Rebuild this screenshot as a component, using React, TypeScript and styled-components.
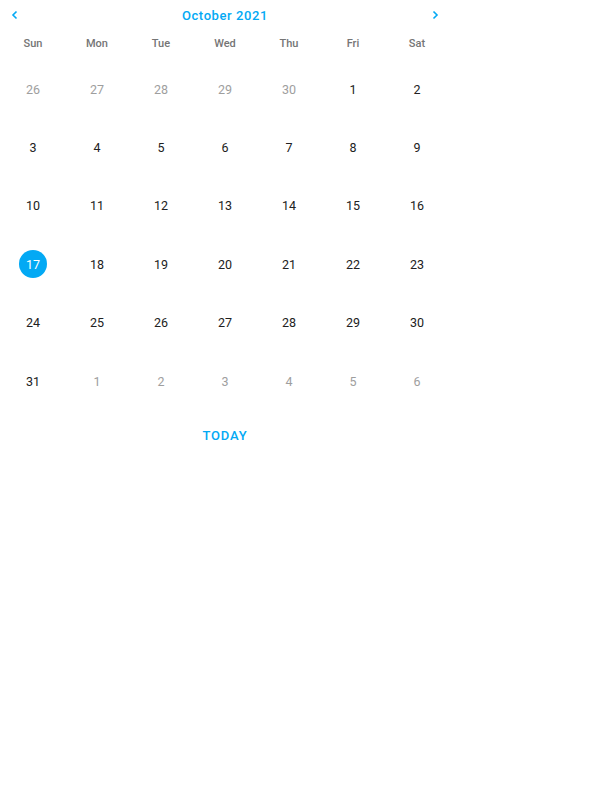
import React from "react";
import styled, { createGlobalStyle } from "styled-components";

const Global = createGlobalStyle`
  body { margin: 0; background: #fff; font-family: Roboto, "Noto Sans", sans-serif; }
`;

const Calendar = styled.div`
  width: 450px;
  display: flex;
  flex-direction: column;
`;

const Header = styled.div`
  height: 30px;
  display: flex;
  align-items: center;
  justify-content: space-between;
  padding: 0 8px;
`;

const NavButton = styled.button`
  width: 14px;
  height: 14px;
  padding: 0;
  border: none;
  background: none;
  display: flex;
  align-items: center;
  justify-content: center;
  color: #03a9f4;
  cursor: pointer;
`;

const Title = styled.div`
  font-size: 13px;
  font-weight: 500;
  letter-spacing: 0.6px;
  color: #03a9f4;
`;

const Grid = styled.div`
  display: grid;
  grid-template-columns: repeat(7, 64px);
  padding: 0 1px;
`;

const WeekDay = styled.div`
  height: 30px;
  box-sizing: border-box;
  display: flex;
  align-items: center;
  justify-content: center;
  font-size: 11px;
  font-weight: 500;
  color: #757575;
  padding-bottom: 4px;
`;

const DayCell = styled.div`
  height: 58.4px;
  display: flex;
  align-items: center;
  justify-content: center;
`;

const Day = styled.div<{ $muted?: boolean; $selected?: boolean }>`
  width: 28px;
  height: 28px;
  border-radius: 50%;
  display: flex;
  align-items: center;
  justify-content: center;
  font-size: 12.5px;
  color: ${(p) => (p.$selected ? "#fff" : p.$muted ? "#9e9e9e" : "#212121")};
  background: ${(p) => (p.$selected ? "#03a9f4" : "transparent")};
`;

const Footer = styled.div`
  height: 50px;
  display: flex;
  align-items: center;
  justify-content: center;
`;

const TodayButton = styled.button`
  border: none;
  background: none;
  font-family: Roboto, sans-serif;
  font-size: 13px;
  font-weight: 500;
  letter-spacing: 0.8px;
  color: #03a9f4;
  padding: 8px;
  cursor: pointer;
`;

const weekdays = ["Sun", "Mon", "Tue", "Wed", "Thu", "Fri", "Sat"];

const days: { d: number; muted?: boolean }[] = [
  ...[26, 27, 28, 29, 30].map((d) => ({ d, muted: true })),
  ...Array.from({ length: 31 }, (_, i) => ({ d: i + 1 })),
  ...[1, 2, 3, 4, 5, 6].map((d) => ({ d, muted: true })),
];

const Chevron = ({ dir }: { dir: "left" | "right" }) => (
  <svg width="10" height="10" viewBox="0 0 10 10">
    <path
      d={dir === "left" ? "M6.5 1.5 L3 5 L6.5 8.5" : "M3.5 1.5 L7 5 L3.5 8.5"}
      fill="none"
      stroke="currentColor"
      strokeWidth="1.6"
    />
  </svg>
);

export default function App() {
  return (
    <>
      <Global />
      <Calendar>
        <Header>
          <NavButton aria-label="previous">
            <Chevron dir="left" />
          </NavButton>
          <Title>October 2021</Title>
          <NavButton aria-label="next">
            <Chevron dir="right" />
          </NavButton>
        </Header>
        <Grid>
          {weekdays.map((w) => (
            <WeekDay key={w}>{w}</WeekDay>
          ))}
          {days.map((x, i) => (
            <DayCell key={i}>
              <Day $muted={x.muted} $selected={!x.muted && x.d === 17}>
                {x.d}
              </Day>
            </DayCell>
          ))}
        </Grid>
        <Footer>
          <TodayButton>TODAY</TodayButton>
        </Footer>
      </Calendar>
    </>
  );
}
